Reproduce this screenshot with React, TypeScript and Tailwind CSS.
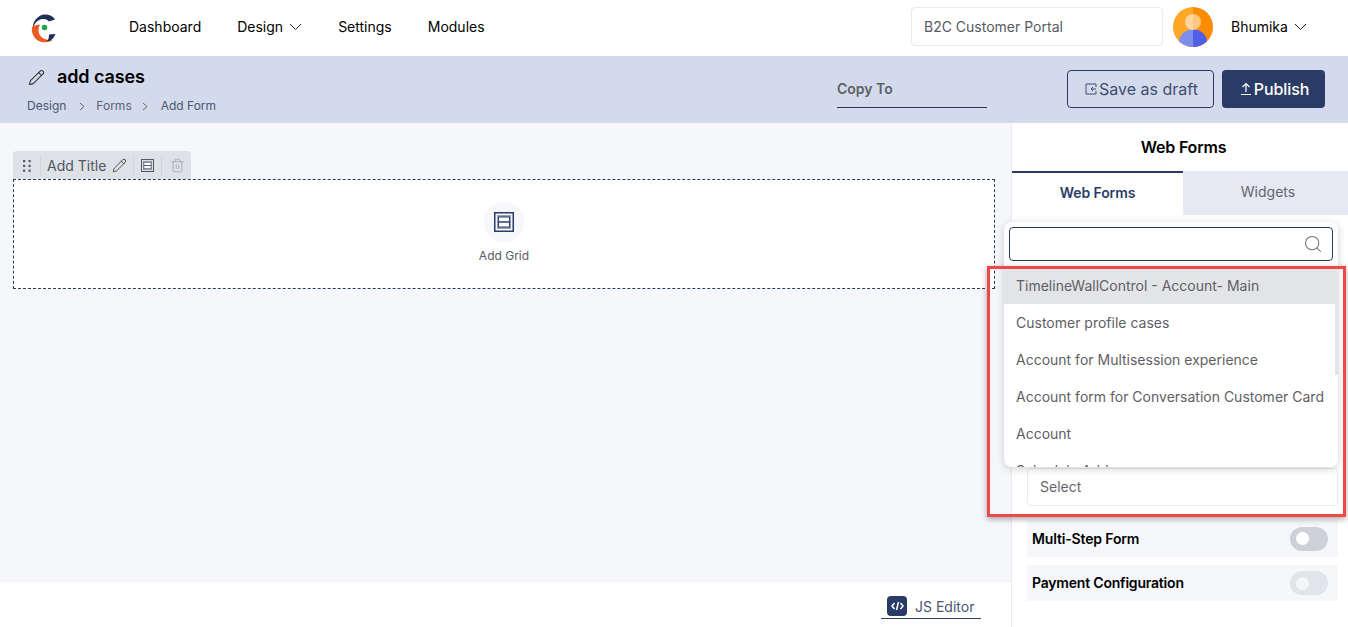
import { Pencil, Search, Trash2 } from "lucide-react";

function Logo() {
  return (
    <svg width="26" height="30" viewBox="0 0 26 30" fill="none">
      <path d="M24 6.500C21 1.500 13 0 8 3.500 3.500 6.500 1.500 11 2 15c1.500-5 5-8.500 9.500-9 3-.3 5 .5 6.500 2.500z" fill="#1f2f58" />
      <path d="M1 14c-1 6 2 12 8 14.500 4.500 1.500 9 1 12.500-1.500-5 .5-10-1-12.500-4.500C7 19.500 7 15 9 11.500 5 12 2.500 13 1 14z" fill="#ea5a24" />
      <path d="M18 21.500l6.500-.5c-1 2.500-2.500 5-5 6.500-2 .5-3 .5-4 .5 2-1 2.500-3 2.500-6.500z" fill="#1f2f58" />
      <circle cx="13.500" cy="14.500" r="2.800" fill="#1fa64a" />
    </svg>
  );
}

function Avatar() {
  return (
    <svg width="40" height="40" viewBox="0 0 40 40">
      <defs>
        <clipPath id="avatar-clip">
          <circle cx="20" cy="20" r="20" />
        </clipPath>
      </defs>
      <g clipPath="url(#avatar-clip)">
        <rect width="20" height="40" fill="#ffa726" />
        <rect x="20" width="20" height="40" fill="#fb8c00" />
        <path d="M20 22a15 13 0 0 0-14 13v5h14z" fill="#7e8ceb" />
        <path d="M20 22a15 13 0 0 1 14 13v5H20z" fill="#4f5fe6" />
        <path d="M20 7a8 8 0 0 0 0 16z" fill="#ffd6a0" />
        <path d="M20 7a8 8 0 0 1 0 16z" fill="#ffc680" />
      </g>
    </svg>
  );
}

function Caret() {
  return (
    <svg width="13" height="8" viewBox="0 0 13 8" fill="none" stroke="#222" strokeWidth="1" className="mt-[2px]">
      <path d="M1 1l5.500 5.500L12 1" />
    </svg>
  );
}

function Crumb() {
  return (
    <svg width="6" height="9" viewBox="0 0 6 9" fill="none" stroke="#666" strokeWidth="1">
      <path d="M1 1l4 3.500L1 8" />
    </svg>
  );
}

function GridIcon({ size, color }: { size: number; color: string }) {
  return (
    <svg width={size} height={size} viewBox="0 0 20 20" fill="none">
      <rect x="0.750" y="0.750" width="18.500" height="18.500" stroke={color} strokeWidth="1.500" />
      <rect x="3" y="3" width="14" height="14" fill={color} fillOpacity="0.450" />
      <rect x="4.500" y="5" width="11" height="10" fill="white" stroke={color} strokeWidth="1" />
      <path d="M4.500 10h11" stroke={color} strokeWidth="1.500" />
    </svg>
  );
}

function Toggle({ dim }: { dim?: boolean }) {
  return (
    <span className={`flex h-6 w-[38px] items-center rounded-full pl-[6px] ${dim ? "bg-[#e2e4e9]" : "bg-[#ced1d8]"}`}>
      <span className={`h-[13px] w-[13px] rounded-full ${dim ? "bg-[#f5f6f8]" : "bg-white"}`} />
    </span>
  );
}

const forms = [
  "Customer profile cases",
  "Account for Multisession experience",
  "Account form for Conversation Customer Card",
  "Account",
];

export default function App() {
  return (
    <div className="relative flex h-[627px] w-[1348px] flex-col overflow-hidden bg-white font-['Inter',sans-serif] text-black">
      {/* Top nav */}
      <header className="flex h-[56px] shrink-0 items-center pl-[31px]">
        <Logo />
        <nav className="ml-[72px] flex items-center gap-9 pb-[4px] text-[14px]">
          <span>Dashboard</span>
          <span className="flex items-center gap-[6px]">
            Design <Caret />
          </span>
          <span>Settings</span>
          <span>Modules</span>
        </nav>
        <div className="mb-[3px] ml-auto flex h-[39px] w-[252px] items-center rounded border border-[#e8eaf3] pl-3 text-[14px] text-[#555b66]">
          B2C Customer Portal
        </div>
        <div className="mb-[3px] ml-[10px]">
          <Avatar />
        </div>
        <span className="mb-[4px] ml-[18px] flex w-[117px] items-center gap-[6px] text-[14px]">
          Bhumika <Caret />
        </span>
      </header>

      {/* Title bar */}
      <div className="flex h-[67px] shrink-0 bg-[#d2daec] pl-[28px] pr-[23px]">
        <div className="pt-[10px]">
          <div className="flex items-center gap-[12px]">
            <Pencil size={17} strokeWidth={1.500} className="text-[#333]" />
            <span className="text-[18px] font-semibold leading-[22px] tracking-[-0.1px]">add cases</span>
          </div>
          <div className="-ml-[1px] mt-[10px] flex items-center text-[12px] leading-[16px] text-[#4b5675]">
            <span>Design</span>
            <span className="ml-[13px] mr-[11px]">
              <Crumb />
            </span>
            <span className="text-[#5a6275]">Forms</span>
            <span className="ml-[10px] mr-[13px]">
              <Crumb />
            </span>
            <span>Add Form</span>
          </div>
        </div>
        <div className="ml-auto mr-[80px] mt-[14px] flex h-[38px] w-[150px] items-center border-b border-[#26385f] text-[14px] font-semibold text-[#5f6064]">
          Copy To
        </div>
        <button className="mt-[14px] flex h-[38px] w-[147px] items-center justify-center gap-[2px] rounded border border-[#2a3c66] pl-[2px] text-[16px] text-[#3f4d70]">
          <svg width="12" height="12" viewBox="0 0 12 12" fill="none" stroke="#3f4d70" strokeWidth="1">
            <path d="M11 4V1H1v10h10V8" />
            <path d="M11 6H6M8 4 6 6l2 2" />
          </svg>
          Save as draft
        </button>
        <button className="ml-2 mt-[14px] flex h-[38px] w-[103px] items-center justify-center gap-[2px] rounded bg-[#2a3c66] pl-[2px] text-[16px] font-medium tracking-[-0.1px] text-white">
          <svg width="12" height="14" viewBox="0 0 12 14" fill="none" stroke="white" strokeWidth="1.200">
            <path d="M6 10V2M2.500 5 6 1.500 9.500 5M1 12.500h10" />
          </svg>
          Publish
        </button>
      </div>

      <div className="flex min-h-0 flex-1">
        {/* Canvas */}
        <main className="flex w-[1012px] shrink-0 flex-col border-r border-[#e8eaf1]">
          <div className="flex-1 bg-[#f5f7fb] pl-[13px] pr-[16px] pt-[28px]">
            <div className="flex h-[29px] w-[178px] items-center rounded-t bg-[#dee1e6] text-[#6b7078]">
              <span className="flex h-[20px] w-[28px] items-center justify-center border-r border-[#d2d5da]">
                <svg width="8" height="12" viewBox="0 0 8 12" fill="#555a64">
                  <rect x="0" y="0" width="2.200" height="2.200" />
                  <rect x="5.500" y="0" width="2.200" height="2.200" />
                  <rect x="0" y="4.800" width="2.200" height="2.200" />
                  <rect x="5.500" y="4.800" width="2.200" height="2.200" />
                  <rect x="0" y="9.600" width="2.200" height="2.200" />
                  <rect x="5.500" y="9.600" width="2.200" height="2.200" />
                </svg>
              </span>
              <span className="ml-[6px] text-[14px] text-[#4f5663]">Add Title</span>
              <Pencil size={15} strokeWidth={1.500} className="ml-[6px] text-[#444]" />
              <span className="ml-[6px] flex h-[20px] w-[29px] items-center justify-center border-x border-[#d2d5da]">
                <GridIcon size={13} color="#4a5568" />
              </span>
              <Trash2 size={15} strokeWidth={1.250} className="ml-[8px] text-[#9ea2a9]" />
            </div>
            <div className="-mt-[1px] flex h-[110px] flex-col items-center border border-dashed border-[#2a3c66] bg-white pt-[22px]">
              <span className="flex h-10 w-10 items-center justify-center rounded-full bg-[#f5f7fb]">
                <GridIcon size={20} color="#2a3c66" />
              </span>
              <span className="mt-[5px] text-[12px] text-[#555b66]">Add Grid</span>
            </div>
          </div>
          <div className="flex h-[46px] shrink-0 justify-end border-t border-[#eef0f5] pr-[30px] pt-[14px]">
            <div className="flex h-[23px] w-[100px] items-start gap-2 border-b border-[#2a3c66] pl-[6px] text-[14px] text-[#4a5672]">
              <span className="flex h-[20px] w-[20px] items-center justify-center rounded bg-[#2a3c66]">
                <svg width="13" height="10" viewBox="0 0 13 10" fill="none" stroke="white" strokeWidth="1.500">
                  <path d="M3.500 2 1 5l2.500 3M9.500 2 12 5 9.500 8M7.500 1 5.500 9" />
                </svg>
              </span>
              JS Editor
            </div>
          </div>
        </main>

        {/* Right panel */}
        <aside className="min-w-0 flex-1">
          <div className="flex h-[48px] items-center justify-center pl-[7px] text-[16px] font-semibold tracking-[-0.2px]">
            Web Forms
          </div>
          <div className="flex h-[44px] text-[14px]">
            <span className="flex w-[171px] items-center justify-center border-t-2 border-[#2a3c66] pb-[4px] font-semibold tracking-[-0.1px] text-[#2a3c66]">
              Web Forms
            </span>
            <span className="flex flex-1 items-center justify-center bg-[#e6e9f3] pb-[4px] pl-[5px] text-[#63666d]">
              Widgets
            </span>
          </div>
          <div className="ml-[15px] mr-[10px] mt-[253px] flex flex-col">
            <div className="flex h-[38px] items-center rounded border border-[#e8eaf3] pb-[2px] pl-3 text-[14px] text-[#63666d]">
              Select
            </div>
            <div className="mt-[14px] flex h-[37px] items-center justify-between bg-[#f5f7fb] pl-[5px] pr-[10px] text-[14px] font-semibold tracking-[-0.15px]">
              Multi-Step Form
              <Toggle />
            </div>
            <div className="mt-2 flex h-[36px] items-center justify-between bg-[#f5f7fb] pl-[5px] pr-[10px] text-[14px] font-semibold tracking-[-0.2px]">
              <span className="-mt-[1px]">Payment Configuration</span>
              <Toggle dim />
            </div>
          </div>
        </aside>
      </div>

      {/* Form picker dropdown */}
      <div className="absolute left-[1004px] top-[222px] h-[245px] w-[334px] overflow-hidden rounded-lg bg-white shadow-[0_2px_8px_rgba(0,0,0,0.18)]">
        <div className="mx-[5px] mt-[5px] flex h-[34px] items-center justify-end rounded border border-[#2a3c66] bg-white pr-[9px]">
          <Search size={20} strokeWidth={1.250} className="text-[#6b7078]" />
        </div>
        <div className="mt-[6px] flex h-[37px] items-center bg-[#e3e4e8] pl-3 text-[14px] text-[#5f6064]">
          TimelineWallControl - Account- Main
        </div>
        {forms.map((form) => (
          <div key={form} className="flex h-[37px] items-center pl-3 text-[14px] text-[#5f6064]">
            {form}
          </div>
        ))}
        <div className="flex h-[37px] items-center pl-3 text-[14px] text-[#5f6064]">Schedule Addon</div>
        <span className="absolute right-0 top-[44px] h-[109px] w-[3px] bg-[#e3e4e8]" />
      </div>

      {/* Red callout */}
      <div className="pointer-events-none absolute left-[987px] top-[266px] h-[251px] w-[359px] border-[3px] border-[#f04848] shadow-[0_2px_6px_rgba(0,0,0,0.35)]" />
    </div>
  );
}
